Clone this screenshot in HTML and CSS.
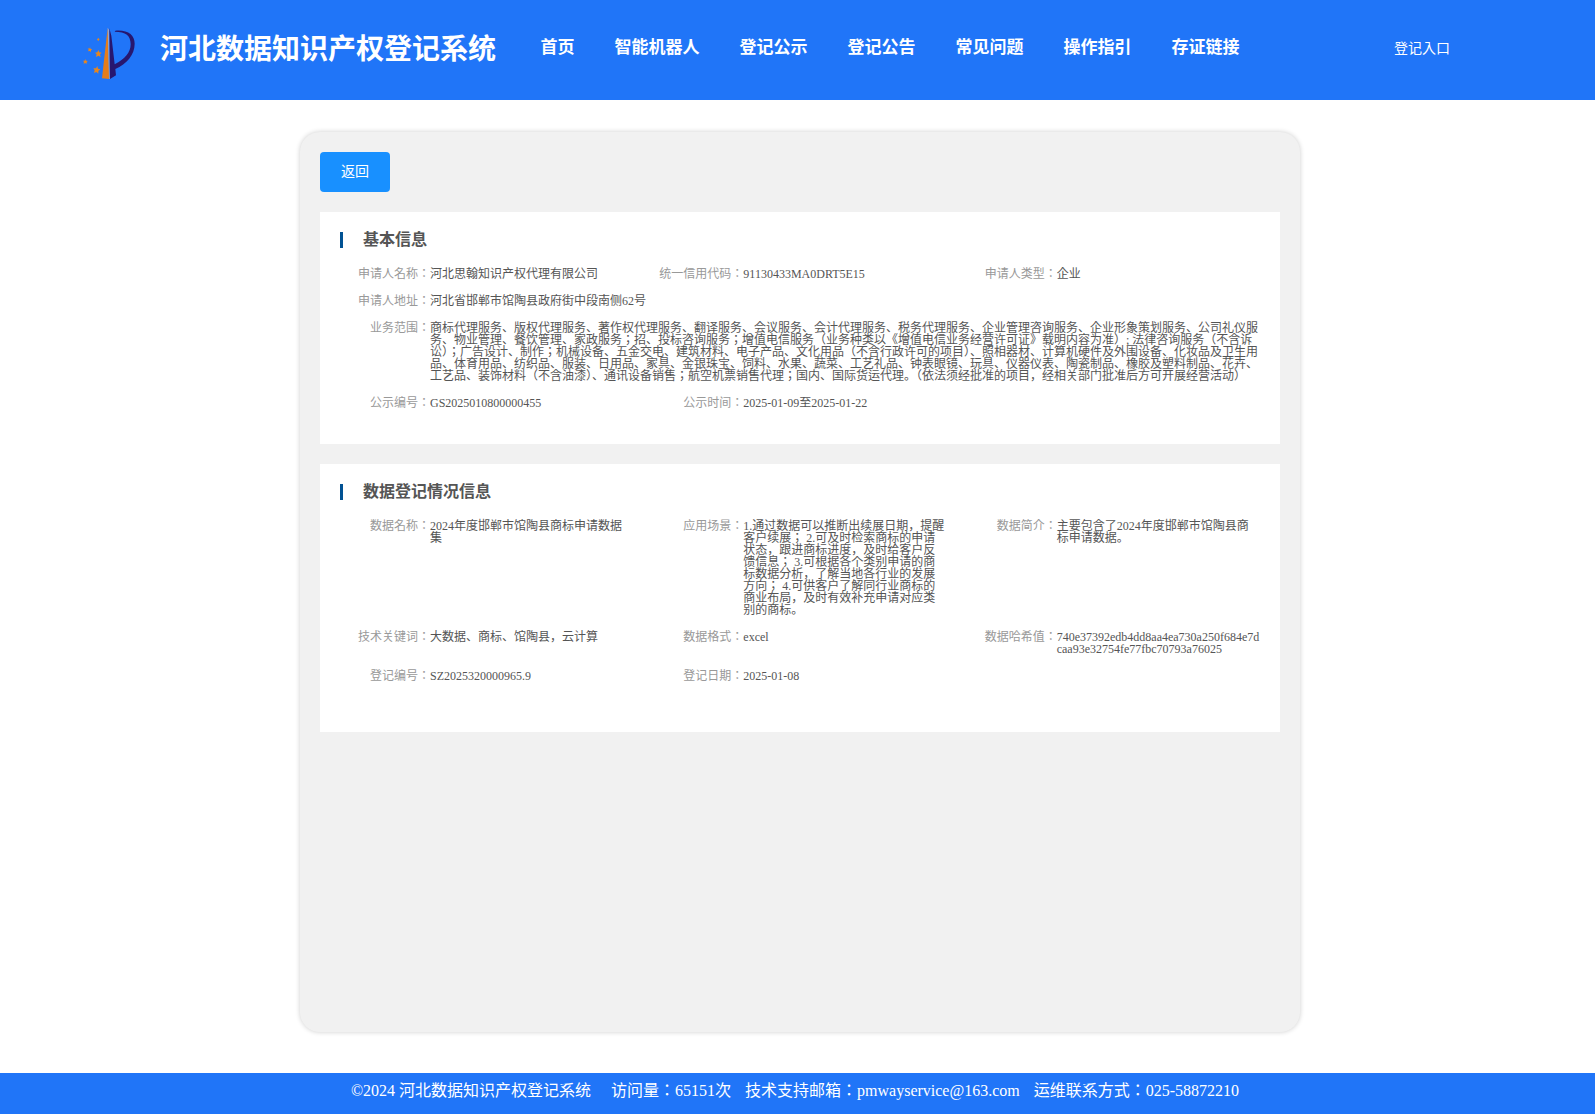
FILE: index.html
```
<!DOCTYPE html>
<html>
<head>
    <meta charset="UTF-8">
    <meta name="viewport" content="width=device-width, initial-scale=1.0">
    <title>河北数据知识产权登记系统</title>
    <link rel="stylesheet" href="styles.css">
</head>
<body>
    <header class="header">
        <svg class="logo" viewBox="0 0 270 225">
            <path fill="#e67d1a" d="M113 38L118 192L96 190Z"/>
            <path fill="#8fa6d8" d="M113 38L118 46L119 192L117 192Z"/>
            <path fill="#27176f" d="M118 40L124 62L134 148C165 132 182 112 182 88C182 62 168 50 134 50L136 47C174 44 194 60 194 86C194 120 170 146 136 162L138 181L120 192Z"/>
            <g fill="#e6861f">
                <path d="M85 105L88 112L95 113L90 118L92 126L85 122L78 126L80 118L75 113L82 112Z"/>
                <path d="M82 153L84 161L91 163L85 168L85 176L79 171L72 174L74 166L70 160L78 160Z"/>
                <path d="M60 97L62 102L67 103L63 106L63 111L59 108L54 109L56 104L53 100L58 101Z"/>
                <path d="M46 132L48 137L53 138L50 142L50 147L46 144L41 146L42 141L39 137L44 137Z"/>
                <path d="M86 68L87 71L89 73L87 75L87 78L84 76L81 76L82 73L81 71L84 71Z"/>
            </g>
        </svg>
        <h1 class="site-title">河北数据知识产权登记系统</h1>
        <nav class="nav">
            <a>首页</a>
            <a>智能机器人</a>
            <a>登记公示</a>
            <a>登记公告</a>
            <a>常见问题</a>
            <a>操作指引</a>
            <a>存证链接</a>
        </nav>
        <a class="entry">登记入口</a>
    </header>

    <main class="panel">
        <button class="back">返回</button>

        <section class="card">
            <h2>基本信息</h2>
            <div class="info">
                <div class="item"><label>申请人名称：</label><p>河北思翰知识产权代理有限公司</p></div>
                <div class="item"><label>统一信用代码：</label><p>91130433MA0DRT5E15</p></div>
                <div class="item"><label>申请人类型：</label><p>企业</p></div>
                <div class="item wide"><label>申请人地址：</label><p>河北省邯郸市馆陶县政府街中段南侧62号</p></div>
                <div class="item wide"><label>业务范围：</label><p>商标代理服务、版权代理服务、著作权代理服务、翻译服务、会议服务、会计代理服务、税务代理服务、企业管理咨询服务、企业形象策划服务、公司礼仪服务、物业管理、餐饮管理、家政服务；招、投标咨询服务；增值电信服务（业务种类以《增值电信业务经营许可证》载明内容为准）; 法律咨询服务（不含诉讼）；广告设计、制作；机械设备、五金交电、建筑材料、电子产品、文化用品（不含行政许可的项目）、照相器材、计算机硬件及外围设备、化妆品及卫生用品、体育用品、纺织品、服装、日用品、家具、金银珠宝、饲料、水果、蔬菜、工艺礼品、钟表眼镜、玩具、仪器仪表、陶瓷制品、橡胶及塑料制品、花卉、工艺品、装饰材料（不含油漆）、通讯设备销售；航空机票销售代理；国内、国际货运代理。（依法须经批准的项目，经相关部门批准后方可开展经营活动）</p></div>
                <div class="item"><label>公示编号：</label><p>GS2025010800000455</p></div>
                <div class="item"><label>公示时间：</label><p>2025-01-09至2025-01-22</p></div>
            </div>
        </section>

        <section class="card data-card">
            <h2>数据登记情况信息</h2>
            <div class="info">
                <div class="item"><label>数据名称：</label><p>2024年度邯郸市馆陶县商标申请数据集</p></div>
                <div class="item"><label>应用场景：</label><p>1.通过数据可以推断出续展日期，提醒客户续展； 2.可及时检索商标的申请状态，跟进商标进度，及时给客户反馈信息； 3.可根据各个类别申请的商标数据分析，了解当地各行业的发展方向； 4.可供客户了解同行业商标的商业布局，及时有效补充申请对应类别的商标。</p></div>
                <div class="item"><label>数据简介：</label><p>主要包含了2024年度邯郸市馆陶县商标申请数据。</p></div>
                <div class="item"><label>技术关键词：</label><p>大数据、商标、馆陶县，云计算</p></div>
                <div class="item"><label>数据格式：</label><p>excel</p></div>
                <div class="item"><label>数据哈希值：</label><p>740e37392edb4dd8aa4ea730a250f684e7dcaa93e32754fe77fbc70793a76025</p></div>
                <div class="item"><label>登记编号：</label><p>SZ2025320000965.9</p></div>
                <div class="item"><label>登记日期：</label><p>2025-01-08</p></div>
            </div>
        </section>
    </main>

    <footer class="footer">
        <span class="copyright">©2024 河北数据知识产权登记系统</span>
        <span>访问量：65151次</span>
        <span>技术支持邮箱：pmwayservice@163.com</span>
        <span>运维联系方式：025-58872210</span>
    </footer>
</body>
</html>
```
FILE: styles.css
```
* {
    margin: 0;
    padding: 0;
    box-sizing: border-box;
}
body {
    font-family: "Liberation Serif", "Noto Sans CJK JP", serif;
    background-color: #fff;
    overflow-x: hidden;
}
.header {
    display: flex;
    align-items: flex-start;
    height: 100px;
    padding-left: 70px;
    background-color: #2075f8;
    color: #fff;
}
.logo {
    width: 90px;
    height: 75px;
    margin-top: 15px;
}
.site-title {
    width: 380.5px;
    font-size: 28px;
    line-height: 100px;
}
.nav {
    display: flex;
    gap: 40px;
    font-size: 17px;
    font-weight: bold;
    line-height: 96px;
}
.entry {
    margin-left: 154.5px;
    font-size: 14px;
    line-height: 98px;
}
.panel {
    width: 1000px;
    height: 900px;
    margin: 32px 0 41px 300px;
    padding: 20px;
    border-radius: 20px;
    background-color: #f1f1f1;
    box-shadow: 0 0 5px rgba(0, 0, 0, 0.2);
}
.back {
    display: block;
    width: 70px;
    height: 40px;
    border: none;
    border-radius: 4px;
    background-color: #1890ff;
    color: #fff;
    font-family: inherit;
    font-size: 14px;
    line-height: 38px;
    cursor: pointer;
}
.card {
    height: 232px;
    margin-top: 20px;
    padding: 20px 0 0 20px;
    background-color: #fff;
}
.data-card {
    height: 268px;
}
.card h2 {
    padding-left: 20px;
    border-left: 3px solid #015293;
    color: #555;
    font-size: 16px;
    line-height: 16px;
}
/* three equal columns, long values take the full row */
.info {
    display: grid;
    grid-template-columns: repeat(3, 1fr);
    row-gap: 15px;
    margin-top: 20px;
    font-size: 12px;
    line-height: 12px;
}
.item {
    display: flex;
    min-width: 0;
    padding-right: 20px;
}
.wide {
    grid-column: 1 / -1;
}
.item label {
    flex: 0 0 90px;
    color: #999;
    text-align: right;
}
.item p {
    flex: 1;
    min-width: 0;
    color: #555;
    overflow-wrap: anywhere;
}
.footer {
    display: flex;
    justify-content: center;
    gap: 14px;
    height: 41px;
    padding-right: 5px;
    background-color: #2075f8;
    color: #fff;
    font-size: 16px;
    line-height: 35px;
}
.copyright {
    margin-right: 6px;
}
```
